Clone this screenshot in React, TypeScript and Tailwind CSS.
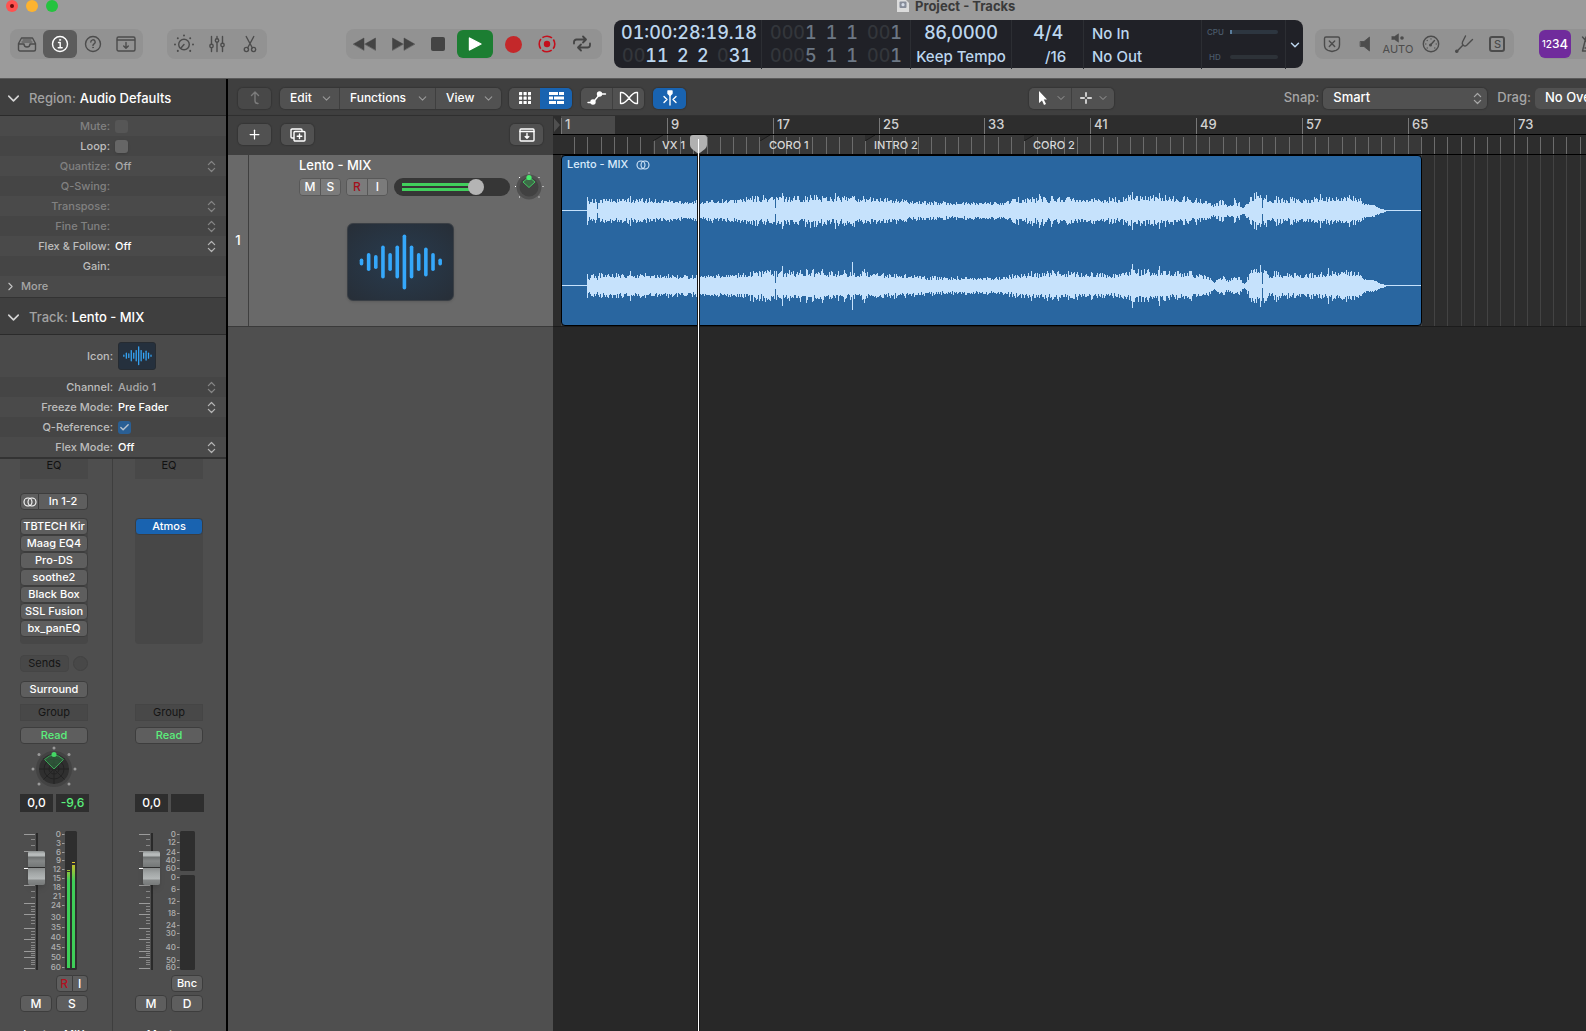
import React from "react";
import clsx, { type ClassValue } from "clsx";
import { twMerge } from "tailwind-merge";
import { ChevronDown, ChevronRight, ChevronsUpDown, Check, Plus } from "lucide-react";

const cn = (...inputs: ClassValue[]) => twMerge(clsx(inputs));

const BAR = 13.23;

const insertPlugins = ["TBTECH Kir", "Maag EQ4", "Pro-DS", "soothe2", "Black Box", "SSL Fusion", "bx_panEQ"];

const markers = [
  { label: "VX 1", left: 92, width: 107 },
  { label: "CORO 1", left: 199, width: 105 },
  { label: "INTRO 2", left: 304, width: 159 },
  { label: "CORO 2", left: 463, width: 397 },
];

// x, body height, peak height
const envelope = [
  [25, 6, 14], [36, 8, 14], [60, 8, 13], [80, 8, 13], [130, 7, 11], [170, 8, 12], [196, 9, 16],
  [215, 9, 16], [260, 9, 17], [300, 9, 15], [330, 8, 13], [370, 6, 10], [428, 6, 9], [440, 6, 9], [455, 8, 14],
  [480, 8, 17], [520, 9, 14], [555, 8, 14], [570, 10, 18], [600, 10, 16], [630, 8, 15], [645, 7, 10], [652, 3, 7],
  [660, 6, 13], [665, 3, 6], [673, 6, 14], [682, 2, 4], [688, 8, 16], [696, 13, 20], [706, 8, 16], [740, 8, 13],
  [790, 10, 17], [798, 8, 13], [803, 6, 7], [812, 5, 6], [819, 2, 2], [824, 1, 1],
];

const spikes: Record<number, number[]> = {
  25: [14, 12], 35: [2, 6], 68: [15, 15], 213: [3, 3], 220: [18, 20], 273: [18, 12], 290: [15, 24], 302: [12, 17],
  477: [17, 12], 570: [19, 22], 597: [18, 20], 694: [19, 17], 698: [16, 21], 700: [3, 2], 758: [17, 12], 766: [12, 18],
};

const noise = (n: number) => {
  const v = Math.sin(n * 127.1) * 43758.5453;
  return v - Math.floor(v);
};

const wavePath = (channel: number, mid: number) => {
  let d = "";
  for (let x = 25; x < 824; x++) {
    const i = envelope.findIndex((p) => p[0] > x);
    const a = envelope[i - 1];
    const b = envelope[i];
    const t = (x - a[0]) / (b[0] - a[0]);
    const body = a[1] + (b[1] - a[1]) * t;
    const peak = a[2] + (b[2] - a[2]) * t;
    const spike = spikes[x]?.[channel];
    const up = spike ?? body + (peak - body) * Math.pow(noise(x + channel * 911), 1.4);
    const down = spike ?? up * (0.85 + 0.2 * noise(x + 400));
    d += `M${x + 0.5} ${mid - Math.round(up)}V${mid + Math.round(down)}`;
  }
  return d;
};

const Svg = ({ w = 20, h = 20, className, children }: { w?: number; h?: number; className?: string; children: React.ReactNode }) => (
  <svg
    width={w}
    height={h}
    viewBox={`0 0 ${w} ${h}`}
    fill="none"
    stroke="currentColor"
    strokeWidth={1.4}
    strokeLinecap="round"
    strokeLinejoin="round"
    className={cn("shrink-0", className)}
    aria-hidden="true"
  >
    {children}
  </svg>
);

const TrayIcon = () => (
  <Svg>
    <path d="M4.500 4h11l3 5.500v6a1.500 1.500 0 0 1-1.500 1.500h-14a1.500 1.500 0 0 1-1.500-1.500v-6zM1.500 10H7c0 1.700 1.300 3 3 3s3-1.300 3-3h5.500" />
    <path d="M6 6h8M5 8h10" strokeWidth={1} />
  </Svg>
);
const InfoIcon = () => (
  <Svg>
    <circle cx="10" cy="10" r="7.500" />
    <path d="M8.500 8.500H10.200V13.500M8.200 13.700h4" />
    <circle cx="10" cy="5.900" r=".7" fill="currentColor" strokeWidth={0.6} />
  </Svg>
);
const HelpIcon = () => (
  <Svg>
    <circle cx="10" cy="10" r="7.500" />
    <path d="M7.800 8a2.200 2.200 0 1 1 3.300 1.900c-.8.500-1.100.8-1.100 1.600" />
    <circle cx="10" cy="13.600" r=".4" fill="currentColor" strokeWidth={0.8} />
  </Svg>
);
const DrawerIcon = () => (
  <Svg>
    <rect x="1" y="3" width="18" height="14" rx="1.500" />
    <path d="M1.500 6h17M10 8.500v5.500M7.700 12l2.300 2.300 2.300-2.300" />
  </Svg>
);
const SmartKnobIcon = () => (
  <Svg w={22}>
    <circle cx="11" cy="10.500" r="5.300" />
    <path d="M11 10.500l-3 3.500" />
    <path d="M11 1.500v.1M4.800 4.200v.1M17.200 4.200v.1M2 10.500v.1M20 10.500v.1M4.800 16.800v.1M17.200 16.800v.1" strokeWidth={2} />
  </Svg>
);
const FadersIcon = () => (
  <Svg>
    <path d="M4.500 2.500V10M4.500 14v3.500M10 2.500v2M10 8.500v9M15.500 2.500V9M15.500 13v4.500" />
    <circle cx="4.500" cy="12" r="1.700" />
    <circle cx="10" cy="6.500" r="1.700" />
    <circle cx="15.500" cy="11" r="1.700" />
  </Svg>
);
const ScissorsIcon = () => (
  <Svg>
    <path d="M6.200 2.500l6.200 11.500M13.800 2.500L7.600 14" />
    <circle cx="6.400" cy="15.500" r="2.100" />
    <circle cx="13.600" cy="15.500" r="2.100" />
  </Svg>
);
const CycleIcon = () => (
  <Svg>
    <g strokeWidth="1.800">
      <path d="M2 9.500V8a2.500 2.500 0 0 1 2.500-2.500H13M11 2.500l3 3-3 3" />
      <path d="M18 9.500V11a2.500 2.500 0 0 1-2.500 2.500H7M9 10.500l-3 3 3 3" />
    </g>
  </Svg>
);
const StereoIcon = ({ className }: { className?: string }) => (
  <Svg w={14} h={10} className={className}>
    <g strokeWidth="1.100">
      <circle cx="5" cy="5" r="4" />
      <circle cx="9" cy="5" r="4" />
    </g>
  </Svg>
);

const WaveBars = ({ className }: { className?: string }) => {
  const bars = [7, 18, 14, 33, 18, 33, 55, 33, 18, 29, 18, 7];
  return (
    <svg viewBox="0 0 84 56" className={className} aria-hidden="true">
      {bars.map((b, i) => (
        <path key={i} d={`M${2.5 + i * 7.15} ${28 - b / 2 + 1.7}v${b - 3.4}`} stroke="#35a8fb" strokeWidth="3.600" strokeLinecap="round" />
      ))}
    </svg>
  );
};

const ToolGroup = ({ className, children }: { className?: string; children: React.ReactNode }) => (
  <div className={cn("flex h-[30px] shrink-0 items-center rounded-lg bg-[#929292] text-[#4c4c4c]", className)}>{children}</div>
);

const ToolButton = ({ label, className, children }: { label: string; className?: string; children: React.ReactNode }) => (
  <button aria-label={label} className={cn("flex h-7 flex-1 items-center justify-center rounded-md", className)}>
    {children}
  </button>
);

const Dim = ({ children }: { children: React.ReactNode }) => <span className="text-[#33363b]">{children}</span>;

const lcdCell = "flex flex-col border-r border-[#2c2e33] pt-px";

const Lcd = () => (
  <div className="ml-3 grid h-12 shrink-0 grid-cols-[148px_149px_101px_72px_118px_84px_17px] rounded-lg bg-[#202127] font-medium text-[#bcd6ee]">
    <div className={cn(lcdCell, "px-[7px] text-lg tabular-nums")}>
      <span className="leading-[23px]">01:00:28:19.18</span>
      <div className="flex justify-between pl-px pr-0.5 leading-[23px]">
        <span><Dim>00</Dim>11</span><span>2</span><span>2</span><span><Dim>0</Dim>31</span>
      </div>
    </div>
    <div className={cn(lcdCell, "px-2 text-lg tabular-nums text-[#6c7784]")}>
      <div className="flex justify-between leading-[23px]">
        <span><Dim>000</Dim>1</span><span>1</span><span>1</span><span><Dim>00</Dim>1</span>
      </div>
      <div className="flex justify-between leading-[23px]">
        <span><Dim>000</Dim>5</span><span>1</span><span>1</span><span><Dim>00</Dim>1</span>
      </div>
    </div>
    <div className={cn(lcdCell, "items-center")}>
      <span className="text-lg leading-[23px]">86,0000</span>
      <span className="text-[15px] leading-[25px]">Keep Tempo</span>
    </div>
    <div className={cn(lcdCell, "pl-[21px]")}>
      <span className="text-lg leading-[23px]">4/4</span>
      <span className="pl-3 text-[15px] leading-[25px]">/16</span>
    </div>
    <div className={cn(lcdCell, "pl-2 pt-0.5 text-[15px]")}>
      <span className="leading-[23px]">No In</span>
      <span className="leading-[23px]">No Out</span>
    </div>
    <div className="flex flex-col justify-between border-r border-[#2c2e33] py-[7px] pl-[5px] pr-[7px] text-[8px] leading-[10px] text-[#4b5b6b]">
      <div className="flex items-center justify-between">
        <span>CPU</span>
        <div className="h-1 w-12 rounded-full bg-[#2d3640]"><div className="h-1 w-0.5 bg-[#5a7d9c]" /></div>
      </div>
      <div className="flex items-center justify-between">
        <span className="pl-0.5">HD</span>
        <div className="h-1 w-12 rounded-full bg-[#2d3238]" />
      </div>
    </div>
    <button aria-label="Display mode" className="flex items-center justify-center">
      <ChevronDown size={14} strokeWidth={2.5} />
    </button>
  </div>
);

const Header = () => (
  <header className="h-[79px] shrink-0 border-b border-[#5a5a5a] bg-[#9b9b9b]">
    <div className="flex h-5 items-start pl-1.5">
      <div className="flex gap-2">
        <button aria-label="Close" className="flex size-3 items-center justify-center rounded-full bg-[#ff5250]">
          <span className="size-1 rounded-full bg-[#6d0b0b]" />
        </button>
        <button aria-label="Minimize" className="size-3 rounded-full bg-[#fdb32f]" />
        <button aria-label="Zoom" className="size-3 rounded-full bg-[#25c33f]" />
      </div>
      <div className="ml-[839px] flex h-3 items-center gap-1.5">
        <svg width="12" height="12" viewBox="0 0 12 12" aria-hidden="true">
          <path d="M0 0h9l3 3v9H0z" fill="#dcdcdc" />
          <rect x="2.500" y="1.500" width="7" height="6.500" rx="1" fill="#868c99" />
          <circle cx="6" cy="4.700" r="1.600" fill="#d5dbe6" />
        </svg>
        <h1 className="whitespace-nowrap text-[13px] font-bold leading-[13px] text-[#3a3a3a]">Project - Tracks</h1>
      </div>
    </div>
    <div className="flex h-12 items-center pl-2.5">
      <ToolGroup className="w-[133px]">
        <ToolButton label="Library"><TrayIcon /></ToolButton>
        <ToolButton label="Inspector" className="bg-[#5c5c5c] text-white"><InfoIcon /></ToolButton>
        <ToolButton label="Quick Help"><HelpIcon /></ToolButton>
        <ToolButton label="Toolbar"><DrawerIcon /></ToolButton>
      </ToolGroup>
      <ToolGroup className="ml-6 w-[100px]">
        <ToolButton label="Smart Controls"><SmartKnobIcon /></ToolButton>
        <ToolButton label="Mixer"><FadersIcon /></ToolButton>
        <ToolButton label="Editors"><ScissorsIcon /></ToolButton>
      </ToolGroup>
      <ToolGroup className="ml-[79px] w-[256px] gap-4 pl-[7px] text-[#444444]">
        <button aria-label="Rewind"><Svg w={23} h={14}><path d="M0.500 7L11 1v12zM12 7l10.500-6v12z" fill="currentColor" strokeWidth={0.5} /></Svg></button>
        <button aria-label="Forward"><Svg w={23} h={14}><path d="M22.500 7L12 1v12zM11 7L.5 1v12z" fill="currentColor" strokeWidth={0.5} /></Svg></button>
        <button aria-label="Stop" className="size-3.5 rounded-[2px] bg-[#444444]" />
        <button aria-label="Play" className="-mx-1 flex h-7 w-9 items-center justify-center rounded-md bg-[#1c7e32] text-white">
          <Svg w={14} h={14}><path d="M1.500 1l11.500 6-11.500 6z" fill="currentColor" /></Svg>
        </button>
        <button aria-label="Record" className="size-[17px] rounded-full bg-[#c4282a]" />
        <button aria-label="Capture Recording" className="text-[#c40f1c]">
          <Svg w={18} h={18}>
            <g strokeLinecap="butt" strokeWidth={1.6}>
              <circle cx="9" cy="9" r="7.800" strokeDasharray="10.250 2" strokeDashoffset="5.125" />
            </g>
            <circle cx="9" cy="9" r="3.200" fill="currentColor" stroke="none" />
          </Svg>
        </button>
        <button aria-label="Cycle"><CycleIcon /></button>
      </ToolGroup>
      <Lcd />
      <ToolGroup className="ml-3 w-[199px]">
        <ToolButton label="Replace">
          <Svg><path d="M2.500 4.500a1.500 1.500 0 0 1 1.500-1.500h12a1.500 1.500 0 0 1 1.500 1.500V11c0 2.500-1.500 4.500-3.500 5.300L10 17.500l-4-1.200C4 15.500 2.500 13.500 2.500 11zM7.300 7l5.400 5.400M12.700 7l-5.400 5.400" /></Svg>
        </ToolButton>
        <ToolButton label="Pre-listen">
          <Svg><path d="M5.500 7.500H9L14.500 3v14L9 12.500H5.500z" fill="currentColor" strokeWidth={0.8} /></Svg>
        </ToolButton>
        <ToolButton label="Auto input monitoring" className="flex-col">
          <Svg w={16} h={10}><path d="M2 3.500h2.500L8.500.8v8.400L4.500 6.500H2z" fill="currentColor" strokeWidth={0.5} /><circle cx="12" cy="5" r="1.800" fill="currentColor" stroke="none" /></Svg>
          <span className="text-[11px] leading-[13px]">AUTO</span>
        </ToolButton>
        <ToolButton label="Low Latency">
          <Svg><circle cx="10" cy="10" r="7.700" /><circle cx="9.500" cy="11" r="1.500" fill="currentColor" stroke="none" /><path d="M9.500 11l4-4.500" /><path d="M4.800 10v.1M6.200 6.500v.1M10 4.800v.1M15.200 10v.1M13.800 14v.1M6.200 14v.1" strokeWidth={1.3} /></Svg>
        </ToolButton>
        <ToolButton label="Tuner">
          <Svg><path d="M11.500 2l-3 6c-.6 1.300 0 2.500.8 3.200.9.800 2.200 1 3.400 0L18.500 5.500M8.800 11.200L3.200 17" /><circle cx="2.800" cy="17.300" r="1.100" fill="currentColor" /></Svg>
        </ToolButton>
        <ToolButton label="Solo">
          <span className="flex size-4 items-center justify-center rounded-[3px] border-2 border-current text-[11px] font-medium">S</span>
        </ToolButton>
      </ToolGroup>
      <ToolGroup className="ml-[25px] w-[70px]">
        <button aria-label="Count-in" className="flex h-7 w-8 shrink-0 items-center justify-center rounded-md bg-[#702b9c] font-medium leading-7 text-white">
          <span className="text-[9px]">1</span><span className="text-[10px]">2</span><span className="text-xs">3</span><span className="text-[13px]">4</span>
        </button>
        <ToolButton label="Metronome"><Svg><path d="M6 3l-3.500 14h13L13 9M2.500 3l10 11M5 14h8" /></Svg></ToolButton>
      </ToolGroup>
    </div>
  </header>
);

type RowProps = { id: string; label: string; value?: string; stepper?: boolean; dim?: boolean; labelWidth?: string; alt?: boolean; bright?: boolean; children?: React.ReactNode };

const InspectorRow = ({ id, label, value, stepper, dim, bright, alt, labelWidth = "w-[110px]", children }: RowProps) => (
  <div className={cn("relative flex h-5 items-center text-[11px] font-medium", alt ? "bg-[#454545]" : "bg-[#4a4a4a]")}>
    <label htmlFor={id} className={cn("text-right", labelWidth, dim ? "text-[#818181]" : "text-[#bdbdbd]")}>{label}:</label>
    <div className="flex flex-1 items-center pl-[5px]">
      {children}
      {stepper && (
        <select id={id} className={cn("h-5 w-full appearance-none bg-transparent", bright ? "text-white" : "text-[#a9a9a9]")}>
          <option>{value}</option>
        </select>
      )}
    </div>
    {stepper && <ChevronsUpDown size={15} className={cn("pointer-events-none absolute right-[7px]", bright ? "text-[#b5b5b5]" : "text-[#858585]")} />}
  </div>
);

const PanelTitle = ({ kind, name }: { kind: string; name: string }) => (
  <button className="flex h-[37px] w-full items-center border-b border-[#2b2b2b] bg-[#3f3f3f] pl-1 pt-[3px] text-[13px] font-medium">
    <ChevronDown size={19} className="text-[#d6d6d6]" />
    <span className="ml-1.5 text-[#a2a2a2]">{kind}:</span>
    <span className="ml-1 text-white">{name}</span>
  </button>
);

const Inspector = () => (
  <div className="border-b-2 border-[#333333] bg-[#4a4a4a]">
    <PanelTitle kind="Region" name="Audio Defaults" />
    <InspectorRow id="mute" label="Mute" dim>
      <input id="mute" type="checkbox" disabled className="size-[13px] appearance-none rounded-[3px] bg-[#565656]" />
    </InspectorRow>
    <InspectorRow id="loop" label="Loop" alt>
      <input id="loop" type="checkbox" className="size-[13px] appearance-none rounded-[3px] bg-[#666666] shadow" />
    </InspectorRow>
    <InspectorRow id="quantize" label="Quantize" value="Off" stepper dim />
    <InspectorRow id="qswing" label="Q-Swing" dim alt />
    <InspectorRow id="transpose" label="Transpose" stepper dim />
    <InspectorRow id="finetune" label="Fine Tune" stepper dim alt />
    <InspectorRow id="flex" label="Flex & Follow" value="Off" stepper bright />
    <InspectorRow id="gain" label="Gain" alt />
    <button className="flex h-[21px] w-full items-center pb-px pl-1 text-[11px] font-medium text-[#a6a6a6]">
      <ChevronRight size={13} className="mr-1 text-[#c4c4c4]" />
      More
    </button>
    <div className="border-t border-[#333333]">
      <PanelTitle kind="Track" name="Lento - MIX" />
    </div>
    <div className="flex h-[42px] items-center text-[11px] font-medium text-[#bdbdbd]">
      <span className="w-[113px] text-right">Icon:</span>
      <button aria-label="Track icon" className="ml-[5px] flex h-7 w-[38px] items-center justify-center rounded-[3px] border border-[#262b31] bg-[#25303d]">
        <WaveBars className="w-[29px]" />
      </button>
    </div>
    <InspectorRow id="channel" label="Channel" value="Audio 1" stepper alt labelWidth="w-[113px]" />
    <InspectorRow id="freeze" label="Freeze Mode" value="Pre Fader" stepper bright labelWidth="w-[113px]" />
    <InspectorRow id="qref" label="Q-Reference" alt labelWidth="w-[113px]">
      <span className="relative flex size-[13px]">
        <input id="qref" type="checkbox" defaultChecked className="size-[13px] appearance-none rounded-[3px] bg-[#2a5f94]" />
        <Check size={11} strokeWidth={3} className="pointer-events-none absolute left-px top-px text-[#b9c4cf]" />
      </span>
    </InspectorRow>
    <InspectorRow id="flexmode" label="Flex Mode" value="Off" stepper bright labelWidth="w-[113px]" />
  </div>
);

const stripButton = "h-[17px] shrink-0 overflow-hidden whitespace-nowrap rounded-[4px] border border-[#3d3d3d] bg-[#5e5e5e] text-center text-[11px] font-medium leading-[15px] text-white";

const PanKnob = ({ className }: { className?: string }) => (
  <svg width="48" height="44" viewBox="0 0 48 44" className={className} aria-hidden="true">
    <circle cx="24" cy="23" r="18" fill="#434343" />
    <circle cx="24" cy="23" r="15" fill="#2f2f2f" />
    <g stroke="#232323" fill="none">
      <circle cx="24" cy="23" r="10" />
      <circle cx="24" cy="23" r="5" />
      <path d="M24 8v30M9 23h30M13.500 12.500l21 21M34.500 12.500l-21 21" />
    </g>
    <path d="M24 23l-9.500-9.500Q24 4.500 33.500 13.500z" fill="#2f6b3f" fillOpacity=".6" stroke="#3aa455" />
    <circle cx="24" cy="8.500" r="2.500" fill="#44d765" />
    <g fill="#9a9a9a">
      <circle cx="24" cy="2" r="1.500" />
      <circle cx="9" cy="8.500" r="1.500" />
      <circle cx="39" cy="8.500" r="1.500" />
      <circle cx="3" cy="23" r="1.500" />
      <circle cx="45" cy="23" r="1.500" />
      <circle cx="9" cy="38" r="1.500" />
      <circle cx="39" cy="38" r="1.500" />
    </g>
  </svg>
);

const longTicks = [3, 20, 54, 72, 83, 97, 108, 120, 126, 137];
const shortTicks = [8, 14, 60, 66, 75, 78, 80, 86, 89, 92, 100, 103, 106, 111, 114, 116, 118, 122, 124, 129, 131, 133];

const audioScale: [string, number][] = [
  ["0", 3], ["3", 12], ["6", 21], ["9", 29], ["12", 38], ["15", 47], ["18", 56], ["21", 65], ["24", 74],
  ["30", 86], ["35", 96], ["40", 106], ["45", 116], ["50", 126], ["60", 136],
];
const masterScale: [string, number][] = [
  ["0", 3], ["12", 11], ["24", 21], ["40", 29], ["60", 37], ["0", 46], ["6", 58], ["12", 70], ["18", 82],
  ["24", 94], ["30", 102], ["40", 116], ["50", 129], ["60", 136],
];

const FaderArea = ({ scale, master, label }: { scale: [string, number][]; master?: boolean; label: string }) => (
  <div className="relative h-[140px] w-[76px] shrink-0">
    <svg width="76" height="140" viewBox="0 0 76 140" className="overflow-visible" aria-hidden="true">
      <g stroke="#9b9b9b">
        {longTicks.map((y) => <path key={y} d={`M4 ${y + 0.5}h11`} />)}
        {shortTicks.map((y) => <path key={y} d={`M11 ${y + 0.5}h4`} stroke="#888888" />)}
      </g>
      <path d="M4 37.500h5" stroke="#ffffff" />
      <rect x="16" y="2" width="2" height="137" fill="#2a2a2a" />
      {scale.map(([n, y], i) => (
        <g key={i}>
          <text x="41" y={y + 3} textAnchor="end" fontSize="8" fontWeight="500" fill="#b0b0b0">{n}</text>
          <path d={`M42 ${y + 0.5}h2.500`} stroke="#a0a0a0" />
        </g>
      ))}
      {master ? (
        <g fill="#2e2e2e">
          <rect x="45" y="0" width="15" height="40" rx="1.500" />
          <rect x="45" y="44" width="15" height="95" rx="1.500" />
        </g>
      ) : (
        <g>
          <defs>
            <linearGradient id="level" x1="0" y1="33" x2="0" y2="50" gradientUnits="userSpaceOnUse">
              <stop offset="0" stopColor="#c9bd2c" />
              <stop offset="1" stopColor="#3fce58" />
            </linearGradient>
          </defs>
          <rect x="45" y="0" width="12" height="139" rx="1.500" fill="#2e2e2e" />
          <rect x="47" y="41" width="3" height="96" fill="url(#level)" />
          <rect x="52" y="34" width="3" height="103" fill="url(#level)" />
          <path d="M47 39.500h3" stroke="#9cc22f" />
          <path d="M52 31.500h3" stroke="#e3c52d" />
        </g>
      )}
    </svg>
    <input
      type="range"
      aria-label={label}
      min={0}
      max={100}
      defaultValue={83}
      className="absolute left-2 top-0.5 h-[137px] w-[17px] appearance-none bg-transparent [direction:rtl] [writing-mode:vertical-lr] [&::-webkit-slider-thumb]:h-[34px] [&::-webkit-slider-thumb]:w-[17px] [&::-webkit-slider-thumb]:appearance-none [&::-webkit-slider-thumb]:rounded-[2px] [&::-webkit-slider-thumb]:bg-[linear-gradient(#8c9090_0px,#b9bdbd_3px,#b4b8b8_5px,#6d7070_6px,#858888_10px,#747777_16px,#2f2f2f_16px,#2f2f2f_17px,#8b8e8e_17px,#a2a6a6_22px,#b4b8b8_28px,#858888_29px,#777a7a_34px)] [&::-webkit-slider-thumb]:shadow-md"
    />
  </div>
);

const Readout = ({ children, className }: { children?: React.ReactNode; className?: string }) => (
  <div className={cn("h-[18px] w-[33px] bg-[#2e2e2e] text-center text-xs font-medium leading-[18px] text-white", className)}>{children}</div>
);

const strip = "flex min-h-0 w-[113px] shrink-0 flex-col overflow-hidden pl-5";
const eqSlot = "h-5 w-[68px] shrink-0 bg-[#484848] text-center text-[11px] leading-3 text-[#111111]";
const darkSlot = "h-[17px] w-[68px] shrink-0 border border-[#454545] bg-[#484848] text-center text-[11px] leading-[15px] text-[#151515]";

const Mixer = () => (
  <div className="flex min-h-0 flex-1 bg-[#4e4e4e]">
    <section aria-label="Lento - MIX channel" className={cn(strip, "border-r border-[#3e3e3e]")}>
      <div className={eqSlot}>EQ</div>
      <div className="mt-3.5 flex w-[68px] shrink-0">
        <button aria-label="Input format" className={cn(stripButton, "flex w-[19px] items-center justify-center rounded-r-none")}><StereoIcon /></button>
        <button className={cn(stripButton, "flex-1 rounded-l-none border-l-0")}>In 1-2</button>
      </div>
      <div className="mt-2 flex h-[126px] w-[68px] shrink-0 flex-col rounded-[4px] bg-[#474747]">
        {insertPlugins.map((p) => (
          <button key={p} className={stripButton}>{p}</button>
        ))}
      </div>
      <div className="mt-[11px] flex h-[17px] w-[68px] shrink-0 gap-1">
        <button className="w-[49px] rounded-[4px] border border-[#454545] bg-[#484848] text-[11px] leading-[15px] text-[#151515]">Sends</button>
        <button aria-label="Send level" className="size-[15px] self-center rounded-full border border-[#424242] bg-[#484848]" />
      </div>
      <button className={cn(stripButton, "mt-[9px] w-[68px]")}>Surround</button>
      <button className={cn(darkSlot, "mt-1.5")}>Group</button>
      <button className={cn(stripButton, "mt-1.5 w-[68px] text-[#5bf07c]")}>Read</button>
      <PanKnob className="ml-2.5 mt-0.5 shrink-0" />
      <div className="mt-1 flex shrink-0 gap-[3px]">
        <Readout>0,0</Readout>
        <Readout className="text-[#5bf07c]">-9,6</Readout>
      </div>
      <div className="h-[19px] shrink-0" />
      <FaderArea scale={audioScale} label="Lento - MIX volume" />
      <div className="ml-9 mt-1 flex w-8 shrink-0">
        <button className={cn(stripButton, "flex-1 rounded-r-none text-xs leading-[15px] text-[#b01220]")}>R</button>
        <button className={cn(stripButton, "flex-1 rounded-l-none border-l-0 text-xs leading-[15px]")}>I</button>
      </div>
      <div className="mt-[3px] flex w-[68px] shrink-0 gap-1">
        <button className={cn(stripButton, "flex-1 text-xs leading-[15px]")}>M</button>
        <button className={cn(stripButton, "flex-1 text-xs leading-[15px]")}>S</button>
      </div>
      <div className="mt-3.5 w-[68px] shrink-0 text-center text-[11px] font-medium text-white">Lento - MIX</div>
    </section>
    <section aria-label="Master channel" className={cn(strip, "pl-[22px]")}>
      <div className={eqSlot}>EQ</div>
      <div className="mt-[39px] flex h-[126px] w-[68px] shrink-0 flex-col rounded-[4px] bg-[#474747]">
        <button className={cn(stripButton, "w-full bg-[#1963b0]")}>Atmos</button>
      </div>
      <button className={cn(darkSlot, "mt-[60px]")}>Group</button>
      <button className={cn(stripButton, "mt-1.5 w-[68px] text-[#5bf07c]")}>Read</button>
      <div className="mt-[50px] flex shrink-0 gap-[3px]">
        <Readout>0,0</Readout>
        <Readout />
      </div>
      <div className="h-[19px] shrink-0" />
      <FaderArea scale={masterScale} master label="Master volume" />
      <button className={cn(stripButton, "ml-9 mt-1 w-8")}>Bnc</button>
      <div className="mt-[3px] flex w-[68px] shrink-0 gap-1">
        <button className={cn(stripButton, "flex-1 text-xs leading-[15px]")}>M</button>
        <button className={cn(stripButton, "flex-1 text-xs leading-[15px]")}>D</button>
      </div>
      <div className="mt-3.5 w-[60px] shrink-0 text-center text-[11px] font-medium text-white">Master</div>
    </section>
  </div>
);

const barButton = "flex h-[21px] items-center justify-center bg-[#515151] text-white";
const barGroup = "flex shrink-0 overflow-hidden rounded-[5px] shadow-[0_0_1px_1px_#363636]";

const MenuButton = ({ label, className }: { label: string; className?: string }) => (
  <button className={cn(barButton, "justify-between pl-2.5 pr-1.5 text-xs font-medium", className)}>
    {label}
    <ChevronDown size={13} className="text-[#999999]" />
  </button>
);

const Toolbar = () => (
  <div className="flex h-[37px] shrink-0 items-center border-b border-[#303030] bg-[#3f3f3f] pl-2.5 pt-0.5">
    <div className={barGroup}>
      <button aria-label="Up one level" className={cn(barButton, "w-[33px] bg-[#484848] text-[#7c7c7c]")}>
        <Svg w={14} h={14}><path d="M3.500 4.500L7 1l3.500 3.500M7 1.500V10c0 2 1 2.500 3 2.500" /></Svg>
      </button>
    </div>
    <div className={cn(barGroup, "ml-[9px] gap-px")}>
      <MenuButton label="Edit" className="w-[59px]" />
      <MenuButton label="Functions" className="w-[95px]" />
      <MenuButton label="View" className="w-[65px]" />
    </div>
    <div className={cn(barGroup, "ml-2")}>
      <button aria-label="Live Loops grid" className={cn(barButton, "w-[31px]")}>
        <svg width="12" height="12" viewBox="0 0 12 12" fill="currentColor" aria-hidden="true">
          {[0, 4.5, 9].map((y) => [0, 4.5, 9].map((x) => <rect key={`${x}-${y}`} x={x} y={y} width="3.200" height="3.200" rx=".5" />))}
        </svg>
      </button>
      <button aria-label="Tracks view" className={cn(barButton, "w-8 bg-[#1963b0]")}>
        <svg width="15" height="12" viewBox="0 0 15 12" fill="currentColor" aria-hidden="true">
          <path d="M0 0h9v3H0zM10 0h5v3h-5zM0 4.500h4v3H0zM5 4.500h10v3H5zM0 9h7v3H0zM8 9h7v3H8z" />
        </svg>
      </button>
    </div>
    <div className={cn(barGroup, "ml-[9px] gap-px")}>
      <button aria-label="Automation" className={cn(barButton, "w-[31px]")}>
        <Svg w={20} h={14}><path d="M1 11.500h5L13 3h5.500" /><circle cx="6" cy="11" r="2" fill="currentColor" /><circle cx="12.500" cy="3" r="2" fill="currentColor" /></Svg>
      </button>
      <button aria-label="Flex" className={cn(barButton, "w-[31px]")}>
        <Svg w={20} h={14}><path d="M1.500 1.500v11h1C9 12.500 11 1.500 17.500 1.500h1v11h-1C11 12.500 9 1.500 2.500 1.500z" strokeWidth={1.3} /></Svg>
      </button>
    </div>
    <div className={cn(barGroup, "ml-[9px]")}>
      <button aria-label="Catch playhead" className={cn(barButton, "w-[33px] bg-[#1963b0]")}>
        <Svg w={16} h={16}><path d="M8 3v12M2 6.500l3 3-3 3M14 6.500l-3 3 3 3" /><path d="M6 1h4v2.500L8 5.500 6 3.500z" fill="currentColor" /></Svg>
      </button>
    </div>
    <div className={cn(barGroup, "ml-[343px] gap-px")}>
      <button aria-label="Pointer tool" className={cn(barButton, "w-[42px] gap-[7px] pl-1")}>
        <svg width="10" height="14" viewBox="0 0 10 14" fill="currentColor" aria-hidden="true"><path d="M1 0l8 8.500H5.800L8 13l-2 1-2-4.500-3 2.500z" /></svg>
        <ChevronDown size={12} className="text-[#999999]" />
      </button>
      <button aria-label="Marquee tool" className={cn(barButton, "w-[42px] gap-[5px] pl-0.5")}>
        <Svg w={12} h={12}><path d="M6 .7v3.600M6 7.700v3.600M.7 6h3.600M7.700 6h3.600" /></Svg>
        <ChevronDown size={12} className="text-[#999999]" />
      </button>
    </div>
    <label htmlFor="snap" className="ml-auto pr-1 text-[13px] font-medium text-[#a6a6a6]">Snap:</label>
    <div className={cn(barGroup, "relative w-[164px]")}>
      <select id="snap" className="h-[21px] w-full appearance-none bg-[#515151] pl-2.5 text-[13px] font-medium text-white"><option>Smart</option></select>
      <ChevronsUpDown size={15} className="pointer-events-none absolute right-0.5 top-[3px] text-[#a6a6a6]" />
    </div>
    <label htmlFor="drag" className="pl-2.5 pr-1 text-[13px] font-medium text-[#a6a6a6]">Drag:</label>
    <div className="flex w-[51px] shrink-0 overflow-hidden rounded-l-[5px]">
      <select id="drag" className="h-[21px] w-[110px] shrink-0 appearance-none bg-[#515151] pl-2.5 text-[13px] font-medium text-white"><option>No Overlap</option></select>
    </div>
  </div>
);

const headerButton = "h-4 w-5 bg-[#7b7b7b] leading-4 text-white";

const TrackHeaders = () => (
  <div className="flex w-[325px] shrink-0 flex-col bg-[#4f4f4f]">
    <div className="flex h-[39px] shrink-0 items-center bg-[#3f3f3f] px-2.5 pb-0.5 shadow">
      <div className={barGroup}><button aria-label="Add track" className={cn(barButton, "w-[33px]")}><Plus size={15} /></button></div>
      <div className={cn(barGroup, "ml-2.5")}>
        <button aria-label="Duplicate track" className={cn(barButton, "w-[33px]")}>
          <Svg w={16} h={14}><path d="M3.500 10H2a1 1 0 0 1-1-1V2a1 1 0 0 1 1-1h9a1 1 0 0 1 1 1v1" /><rect x="4" y="3.500" width="11" height="9.500" rx="1" /><path d="M9.500 6v4.500M7.200 8.200h4.600" /></Svg>
        </button>
      </div>
      <div className={cn(barGroup, "ml-auto")}>
        <button aria-label="Track header configuration" className={cn(barButton, "w-[33px]")}>
          <Svg w={16} h={14}><rect x="1" y="1" width="14" height="12" rx="1" /><path d="M1 3.500h14M8 5.500v4.500M6.200 8.500L8 10.300l1.800-1.800" /></Svg>
        </button>
      </div>
    </div>
    <div className="flex h-[172px] shrink-0 border-b border-[#3a3a3a] bg-[#696969]">
      <div className="flex w-[21px] items-center justify-center border-r border-[#3f3f3f] text-[13px] font-medium text-white">1</div>
      <div className="flex flex-1 flex-col pl-[50px]">
        <h2 className="text-[13px] font-medium leading-5 text-white">Lento - MIX</h2>
        <div className="flex h-6 items-center text-xs font-medium">
          <div className="flex overflow-hidden rounded-[4px] border border-[#585858]">
            <button className={headerButton}>M</button>
            <button className={cn(headerButton, "border-l border-[#585858]")}>S</button>
          </div>
          <div className="ml-[5px] flex overflow-hidden rounded-[4px] border border-[#585858]">
            <button className={cn(headerButton, "text-[#a3101c]")}>R</button>
            <button className={cn(headerButton, "border-l border-[#585858]")}>I</button>
          </div>
          <div className="relative ml-1.5 flex h-[18px] w-[116px] flex-col justify-center gap-0.5 rounded-full bg-[#363636] pl-2">
            <div className="h-[3px] w-[70px] bg-[#41cf5c]" />
            <div className="h-[3px] w-[74px] bg-[#41cf5c]" />
            <input
              type="range"
              aria-label="Track volume"
              defaultValue={74}
              className="absolute inset-x-0 top-px h-4 w-full appearance-none bg-transparent [&::-webkit-slider-thumb]:size-4 [&::-webkit-slider-thumb]:appearance-none [&::-webkit-slider-thumb]:rounded-full [&::-webkit-slider-thumb]:bg-[#b4b4b4]"
            />
          </div>
          <svg width="30" height="30" viewBox="0 0 30 30" className="ml-1 shrink-0" aria-hidden="true">
            <circle cx="15" cy="15" r="12.500" fill="#505050" />
            <circle cx="15" cy="15" r="9.500" fill="#414141" />
            <path d="M15 5l6 5-6 5.500L9 10z" fill="#3c6b47" stroke="#43c862" />
            <circle cx="15" cy="5.500" r="2.600" fill="#47ee6c" />
            <path d="M15 .5v1M1 14.500h1M28.500 14.500h1M5 5.500h1M24.500 5.500h1M5 25h1M24.500 25h1" stroke="#ffffff" />
          </svg>
        </div>
        <button aria-label="Track icon" className="ml-12 mt-[24px] flex h-[78px] w-[107px] items-center justify-center rounded-md border border-[#3a3f45] bg-[radial-gradient(#283c50,#272e37)] shadow">
          <WaveBars className="w-[84px]" />
        </button>
      </div>
    </div>
  </div>
);

const Timeline = () => {
  const bars = Array.from({ length: 79 }, (_, i) => i);
  return (
    <div className="relative min-w-0 flex-1 overflow-hidden bg-[#282828]">
      <div className="relative h-[19px] border-b border-black bg-[#2d2d2d] text-[13px] font-medium text-[#d2d2d2]">
        <div className="absolute inset-y-0 left-2 w-[54px] bg-[#4a4a4a]" />
        <svg width="8" height="14" viewBox="0 0 8 14" className="absolute left-0 top-0.5" aria-hidden="true"><path d="M1 0l6 7-6 7z" fill="#4f4f4f" /></svg>
        {bars.filter((b) => b % 8 === 0).map((b) => (
          <span key={b} className="absolute bottom-0 top-0.5 border-l border-[#777777] pl-[3px] leading-[13px]" style={{ left: Math.round(8 + b * BAR) }}>
            {b + 1}
          </span>
        ))}
      </div>
      <div className="relative h-5 border-b border-black bg-[#2d2d2d]">
        {markers.map((m) => (
          <div key={m.label} className="absolute inset-y-0 bg-[#383838]" style={{ left: m.left + 8, width: m.width }} />
        ))}
        {bars.slice(1).map((b) => (
          <i key={b} className={cn("absolute bottom-0 w-px bg-[#6c6c6c]", b % 8 ? "top-0.5" : "top-0")} style={{ left: Math.round(8 + b * BAR) }} />
        ))}
        {markers.map((m) => (
          <button key={m.label} className="absolute inset-y-0 pt-0.5 text-left text-[11px] font-medium text-[#d8d8d8]" style={{ left: m.left + 8, width: m.width }}>
            <svg width="10" height="6" viewBox="0 0 10 6" className="absolute left-0 top-0" aria-hidden="true">
              <path d="M0 0h10L0 6z" fill="#2d2d2d" />
              <path d="M10 0L0 6" stroke="#1d1d1d" />
            </svg>
            <span className="pl-[9px]">{m.label}</span>
          </button>
        ))}
      </div>
      <div className="relative h-[172px] border-b border-[#1c1c1c] bg-[#2d2d2d]">
        {bars.map((b) => (
          <i key={b} className="absolute inset-y-0 w-px bg-[#434343]" style={{ left: Math.round(8 + b * BAR) }} />
        ))}
        <div className="absolute left-2 top-0 h-[171px] w-[861px] overflow-hidden rounded-[4px] border border-black bg-[#2966a0]">
          <div className="flex items-center gap-2 pl-[5px] text-[11px] font-medium leading-[17px] text-[#d8eafb]">
            Lento - MIX
            <StereoIcon />
          </div>
          <svg width="859" height="169" viewBox="0 0 859 169" className="absolute inset-0" shapeRendering="crispEdges" aria-hidden="true">
            <path d={wavePath(0, 55)} stroke="#c6e2fc" />
            <path d={wavePath(1, 130)} stroke="#c6e2fc" />
            <path d="M0 54.500h859M0 129.500h859" stroke="#c6e2fc" />
          </svg>
        </div>
      </div>
      <div className="absolute bottom-0 left-[144px] top-[19px] w-[3px] border-x border-[#1a1a1a] bg-white" />
      <svg width="17" height="19" viewBox="0 0 17 19" className="absolute left-[137px] top-[19px]" aria-hidden="true">
        <path d="M0 3q0-3 3-3h11q3 0 3 3v7q0 2-2 4l-6.500 5L2 14q-2-2-2-4z" fill="#b1b1b1" />
        <path d="M8.500 4v15" stroke="#ffffff" />
      </svg>
    </div>
  );
};

const App: React.FC = () => {
  return (
    <div className="flex h-screen flex-col overflow-hidden bg-[#282828] font-['Inter',sans-serif]">
      <Header />
      <div className="flex min-h-0 flex-1">
        <aside className="flex w-[228px] shrink-0 flex-col border-r-2 border-black">
          <Inspector />
          <Mixer />
        </aside>
        <main className="flex min-w-0 flex-1 flex-col">
          <Toolbar />
          <div className="flex min-h-0 flex-1">
            <TrackHeaders />
            <Timeline />
          </div>
        </main>
      </div>
    </div>
  );
};

export default App;
